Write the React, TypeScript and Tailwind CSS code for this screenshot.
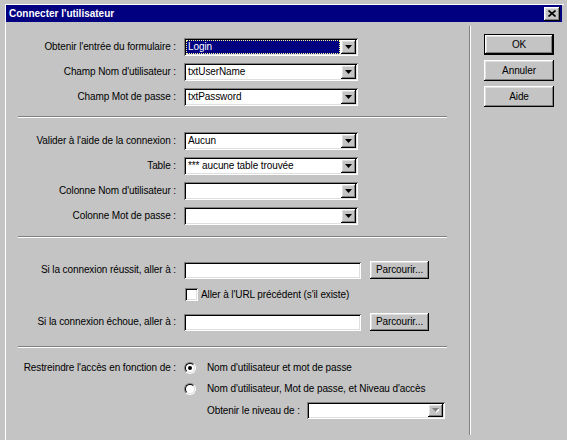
import React from "react"

const sunken =
  "shadow-[inset_1px_1px_#808080,inset_-1px_-1px_#ffffff,inset_2px_2px_#000000,inset_-2px_-2px_#dfdfdf]"
const raised =
  "shadow-[inset_-1px_-1px_#000000,inset_1px_1px_#ffffff,inset_-2px_-2px_#808080,inset_2px_2px_#dfdfdf]"

function ArrowBtn({ disabled }: { disabled?: boolean }) {
  return (
    <div className={`w-[15px] h-full bg-[#c4c4c4] flex items-center justify-center ${raised}`}>
      <svg width="7" height="5" viewBox="0 0 7 5">
        {disabled && <path d="M1 1h7L4.5 5z" fill="#ffffff" />}
        <path d="M0 0h7L3.5 4z" fill={disabled ? "#808080" : "#000000"} />
      </svg>
    </div>
  )
}

function Combo({
  className,
  value,
  selected,
  disabled
}: {
  className: string
  value?: string
  selected?: boolean
  disabled?: boolean
}) {
  return (
    <div className={`${className} flex p-[2px] bg-white ${sunken}`}>
      <div className="flex-1 min-w-0 flex items-center pr-[1px]">
        {selected ? (
          <div className="h-full w-full flex items-center pl-[2px] bg-[#000080] text-white outline-1 outline-dotted outline-offset-[-1px] outline-[#ffff99]">
            {value}
          </div>
        ) : (
          <span className="pl-[2px] whitespace-nowrap">{value}</span>
        )}
      </div>
      <ArrowBtn disabled={disabled} />
    </div>
  )
}

function Row({ label, children }: { label: string; children: React.ReactNode }) {
  return (
    <div className="flex items-center h-[18px]">
      <div className="w-[170px] text-right whitespace-nowrap">{label}</div>
      <div className="ml-[8px] flex items-center">{children}</div>
    </div>
  )
}

function Sep({ className }: { className: string }) {
  return <div className={`${className} ml-[12px] w-[429px] h-[2px] border-t border-t-[#808080] border-b border-b-white`} />
}

function Radio({ checked }: { checked?: boolean }) {
  return (
    <div className="w-[12px] h-[12px] rounded-full border border-t-[#808080] border-l-[#808080] border-b-white border-r-white">
      <div className="w-full h-full rounded-full border border-t-black border-l-black border-b-[#dfdfdf] border-r-[#dfdfdf] bg-white flex items-center justify-center">
        {checked && <div className="w-[4px] h-[4px] rounded-full bg-black" />}
      </div>
    </div>
  )
}

function Button({ label, className }: { label: string; className: string }) {
  return (
    <div className={`${className} bg-[#c4c4c4] flex items-center justify-center ${raised}`}>
      {label}
    </div>
  )
}

export default function App() {
  return (
    <div className="w-[567px] h-[440px] overflow-hidden bg-[#c4c4c4] pl-[5px] pt-[4px] pr-[3px] font-['Liberation_Sans',Arial,sans-serif] text-[10px] tracking-[-0.1px] text-black leading-none">
      <div className="h-full flex flex-col border-l border-t border-white pr-[2px]">

        {/* TITLE BAR */}

        <div className="h-[17px] shrink-0 bg-[#000080] flex items-center justify-between pl-[3px] pr-[2px]">
          <span className="text-white font-bold tracking-normal">Connecter l'utilisateur</span>
          <div className={`w-[16px] h-[14px] bg-[#c4c4c4] flex items-center justify-center ${raised}`}>
            <svg width="8" height="7" viewBox="0 0 8 7">
              <path d="M0.5 0.5L7.5 6.5M7.5 0.5L0.5 6.5" stroke="#000" strokeWidth="1.6" />
            </svg>
          </div>
        </div>

        <div className="flex flex-1">

          {/* FORM */}

          <div className="w-[463px] pt-[16px]">

            <div className="flex flex-col gap-[7px]">
              <Row label="Obtenir l'entrée du formulaire :">
                <Combo className="w-[174px] h-[18px]" value="Login" selected />
              </Row>
              <Row label="Champ Nom d'utilisateur :">
                <Combo className="w-[174px] h-[18px]" value="txtUserName" />
              </Row>
              <Row label="Champ Mot de passe :">
                <Combo className="w-[174px] h-[18px]" value="txtPassword" />
              </Row>
            </div>

            <Sep className="mt-[10px]" />

            <div className="mt-[14px] flex flex-col gap-[7px]">
              <Row label="Valider à l'aide de la connexion :">
                <Combo className="w-[174px] h-[18px]" value="Aucun" />
              </Row>
              <Row label="Table :">
                <Combo className="w-[174px] h-[18px]" value="*** aucune table trouvée" />
              </Row>
              <Row label="Colonne Nom d'utilisateur :">
                <Combo className="w-[174px] h-[18px]" />
              </Row>
              <Row label="Colonne Mot de passe :">
                <Combo className="w-[174px] h-[18px]" />
              </Row>
            </div>

            <Sep className="mt-[11px]" />

            {/* REDIRECTS */}

            <div className="mt-[23px]">
              <Row label="Si la connexion réussit, aller à :">
                <div className={`w-[177px] h-[17px] bg-white ${sunken}`} />
                <Button label="Parcourir..." className="ml-[9px] w-[59px] h-[18px]" />
              </Row>
            </div>

            <div className="mt-[9px] ml-[179px] flex items-center">
              <div className={`w-[13px] h-[13px] bg-white ${sunken}`} />
              <span className="ml-[3px]">Aller à l'URL précédent (s'il existe)</span>
            </div>

            <div className="mt-[12px]">
              <Row label="Si la connexion échoue, aller à :">
                <div className={`w-[177px] h-[17px] bg-white ${sunken}`} />
                <Button label="Parcourir..." className="ml-[9px] w-[59px] h-[18px]" />
              </Row>
            </div>

            <Sep className="mt-[15px]" />

            {/* ACCESS */}

            <div className="mt-[13px] flex items-center h-[13px]">
              <div className="w-[170px] text-right whitespace-nowrap">Restreindre l'accès en fonction de :</div>
              <div className="ml-[8px]"><Radio checked /></div>
              <span className="ml-[11px]">Nom d'utilisateur et mot de passe</span>
            </div>

            <div className="mt-[8px] ml-[178px] flex items-center h-[13px]">
              <Radio />
              <span className="ml-[11px]">Nom d'utilisateur, Mot de passe, et Niveau d'accès</span>
            </div>

            <div className="mt-[7px] ml-[201px] flex items-center">
              <span className="w-[100px] whitespace-nowrap">Obtenir le niveau de :</span>
              <Combo className="w-[138px] h-[17px]" disabled />
            </div>

          </div>

          <div className="w-[2px] mt-[4px] h-[409px] border-l border-l-[#808080] border-r border-r-white" />

          {/* BUTTONS */}

          <div className="pl-[13px] pt-[12px] flex flex-col gap-[5px]">
            <div className="border border-black">
              <Button label="OK" className="w-[68px] h-[19px]" />
            </div>
            <Button label="Annuler" className="w-[70px] h-[21px]" />
            <Button label="Aide" className="w-[70px] h-[21px]" />
          </div>

        </div>
      </div>
    </div>
  )
}
